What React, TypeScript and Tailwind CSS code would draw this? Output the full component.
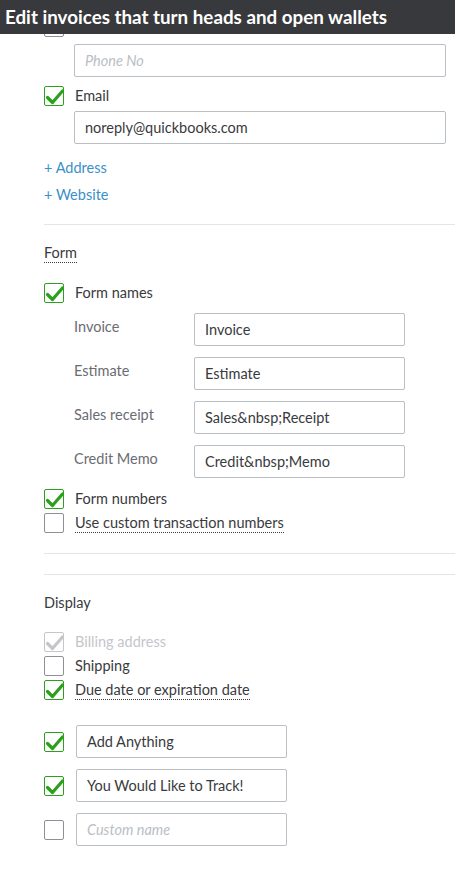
import React from "react";

const font = { fontFamily: "Lato, 'Open Sans', Arial, sans-serif" };

const Check = ({ checked = false, disabled = false }: { checked?: boolean; disabled?: boolean }) => {
  const border = disabled ? "border-[#c4c6ca]" : checked ? "border-[#2ca01c]" : "border-[#8d9096]";
  const stroke = disabled ? "#c4c6ca" : "#2ca01c";
  return (
    <span className={`relative flex h-5 w-5 shrink-0 rounded-[2px] border bg-white ${border}`}>
      {checked && (
        <svg viewBox="0 0 20 20" className="absolute left-0 top-0 h-5 w-5 overflow-visible">
          <path d="M2.5 10.5 L7.5 15.5 L17.5 4" fill="none" stroke={stroke} strokeWidth="3.2" strokeLinecap="round" strokeLinejoin="round" />
        </svg>
      )}
    </span>
  );
};

const Input = ({ value, placeholder, className = "" }: { value?: string; placeholder?: string; className?: string }) => (
  <div className={`flex h-[33px] items-center rounded-[2px] border border-[#babec5] bg-white px-[10px] text-[14.5px] ${className}`}>
    {value ? (
      <span className="text-[#393a3d]">{value}</span>
    ) : (
      <span className="italic text-[#babec5]">{placeholder}</span>
    )}
  </div>
);

const CheckRow = ({ label, checked, disabled, dotted }: { label: string; checked?: boolean; disabled?: boolean; dotted?: boolean }) => (
  <div className="flex h-5 items-center gap-[11px]">
    <Check checked={checked} disabled={disabled} />
    <span
      className={`text-[14.5px] leading-[18px] ${disabled ? "text-[#c4c6ca]" : "text-[#393a3d]"} ${
        dotted ? "border-b border-dotted border-[#393a3d]" : ""
      }`}
    >
      {label}
    </span>
  </div>
);

const NameRow = ({ label, value }: { label: string; value: string }) => (
  <div className="flex items-start">
    <span className="w-[120px] pt-[5px] text-[14.5px] leading-[18px] text-[#6b6c72]">{label}</span>
    <Input value={value} className="w-[211px]" />
  </div>
);

export default function App() {
  return (
    <div className="relative h-[871px] w-[455px] overflow-hidden bg-white" style={font}>
      <div className="absolute left-0 top-0 z-10 flex h-[34px] w-full items-center bg-[#38393c] pl-[5px]">
        <span className="text-[18.8px] font-bold leading-none text-white">Edit invoices that turn heads and open wallets</span>
      </div>

      <div className="pl-[44px] pt-[17px]">
        <Check />
        <Input placeholder="Phone No" className="ml-[30px] mt-[7px] w-[372px]" />

        <div className="mt-[9px]">
          <CheckRow label="Email" checked />
        </div>
        <Input value="noreply@quickbooks.com" className="ml-[30px] mt-[5px] w-[372px]" />

        <div className="mt-[15px] text-[14.5px] leading-[18px] text-[#3a8fc8]">+ Address</div>
        <div className="mt-[9px] text-[14.5px] leading-[18px] text-[#3a8fc8]">+ Website</div>

        <div className="mt-[20px] h-px bg-[#e3e5e8]" />

        <div className="mt-[19px] flex text-[14.5px] leading-[18px] text-[#393a3d]">
          <span className="border-b border-dotted border-[#393a3d]">Form</span>
        </div>

        <div className="mt-[20px]">
          <CheckRow label="Form names" checked />
        </div>

        <div className="ml-[30px] mt-[10px] flex flex-col gap-[11px]">
          <NameRow label="Invoice" value="Invoice" />
          <NameRow label="Estimate" value="Estimate" />
          <NameRow label="Sales receipt" value="Sales&amp;nbsp;Receipt" />
          <NameRow label="Credit Memo" value="Credit&amp;nbsp;Memo" />
        </div>

        <div className="mt-[11px] flex flex-col gap-[4px]">
          <CheckRow label="Form numbers" checked />
          <CheckRow label="Use custom transaction numbers" dotted />
        </div>

        <div className="mt-[20px] h-px bg-[#e3e5e8]" />
        <div className="mt-[20px] h-px bg-[#e3e5e8]" />

        <div className="mt-[19px] text-[14.5px] leading-[18px] text-[#393a3d]">Display</div>

        <div className="mt-[20px] flex flex-col gap-[4px]">
          <CheckRow label="Billing address" checked disabled />
          <CheckRow label="Shipping" />
          <CheckRow label="Due date or expiration date" checked dotted />
        </div>

        <div className="mt-[25px] flex flex-col gap-[11px]">
          {[
            { v: "Add Anything", c: true },
            { v: "You Would Like to Track!", c: true },
            { v: "", c: false },
          ].map((r, i) => (
            <div key={i} className="flex items-center gap-[12px]">
              <Check checked={r.c} />
              <Input value={r.v} placeholder="Custom name" className="w-[211px]" />
            </div>
          ))}
        </div>
      </div>
    </div>
  );
}
